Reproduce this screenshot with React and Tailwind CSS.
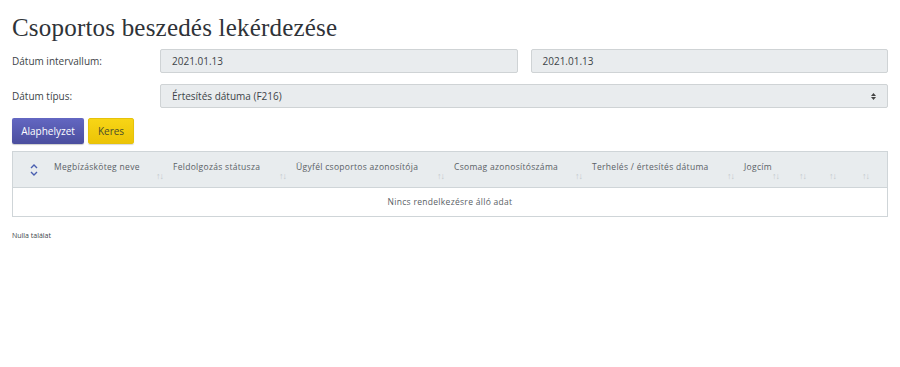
import React from "react";

function SortIcon() {
  return (
    <span className="text-[9px] leading-none text-[#c3c9cc] tracking-[-1px] self-end mb-[3px] shrink-0">↑↓</span>
  );
}

const cols = [
  { label: "Megbízásköteg neve", w: "w-[119px]" },
  { label: "Feldolgozás státusza", w: "w-[123px]" },
  { label: "Ügyfél csoportos azonosítója", w: "w-[158px]" },
  { label: "Csomag azonosítószáma", w: "w-[138px]" },
  { label: "Terhelés / értesítés dátuma", w: "w-[152px]" },
  { label: "Jogcím", w: "w-[42px]" },
];

export default function App() {
  return (
    <div className="w-[900px] h-[367px] bg-white px-[12px] pt-[12px] text-[#3d4448]" style={{ fontFamily: "'Open Sans', 'Noto Sans', sans-serif" }}>
      <h1 className="text-[25px] leading-[31px] text-[#2f3338] tracking-[0.2px]" style={{ fontFamily: "'Liberation Serif', 'DejaVu Serif', serif" }}>
        Csoportos beszedés lekérdezése
      </h1>
      <div className="mt-[6px] flex items-center h-[24px]">
        <div className="w-[148px] text-[10px]">Dátum intervallum:</div>
        <div className="flex-1 h-[24px] bg-[#e9ecee] border border-[#cfd3d5] rounded-[2px] flex items-center px-[11px] text-[10px]">2021.01.13</div>
        <div className="w-[13px]" />
        <div className="flex-1 h-[24px] bg-[#e9ecee] border border-[#cfd3d5] rounded-[2px] flex items-center px-[11px] text-[10px]">2021.01.13</div>
      </div>
      <div className="mt-[11px] flex items-center h-[24px]">
        <div className="w-[148px] text-[10px]">Dátum típus:</div>
        <div className="flex-1 h-[24px] bg-[#e9ecee] border border-[#cfd3d5] rounded-[2px] flex items-center justify-between pl-[11px] pr-[11px] text-[10px]">
          <span>Értesítés dátuma (F216)</span>
          <svg width="5" height="7" viewBox="0 0 5 7" fill="#444">
            <path d="M0 3 L2.5 0 L5 3 Z" />
            <path d="M0 4 L2.5 7 L5 4 Z" />
          </svg>
        </div>
      </div>
      <div className="mt-[10px] flex gap-[4px]">
        <button className="h-[26px] w-[72px] rounded-[2px] text-[10px] text-white bg-gradient-to-b from-[#6367c2] to-[#4b4e9e] shadow-[0_1px_1px_rgba(0,0,0,0.2)]">Alaphelyzet</button>
        <button className="h-[26px] w-[46px] rounded-[2px] text-[10px] text-[#4a4d2a] bg-gradient-to-b from-[#f7d515] to-[#ecc406] border border-[#e6c20a] shadow-[0_1px_1px_rgba(0,0,0,0.15)]">Keres</button>
      </div>
      <div className="mt-[7px] border border-[#cfd5d8]">
        <div className="h-[36px] bg-[#e8ecee] border-b border-[#cfd5d8] flex items-stretch text-[8.5px] tracking-[0.3px] text-[#5a6166]">
          <div className="w-[41px] flex items-center justify-center">
            <svg width="8" height="12" viewBox="0 0 8 12" fill="none" stroke="#4a5fb0" strokeWidth="1.4">
              <path d="M1 4 L4 1 L7 4" />
              <path d="M1 8 L4 11 L7 8" />
            </svg>
          </div>
          {cols.map((c) => (
            <div key={c.label} className={`${c.w} flex items-center justify-between pr-[10px] py-[4px]`}>
              <span className="self-center -mt-[4px]">{c.label}</span>
              <SortIcon />
            </div>
          ))}
          <div className="w-[30px] flex justify-end pr-[10px] py-[4px]"><SortIcon /></div>
          <div className="w-[30px] flex justify-end pr-[10px] py-[4px]"><SortIcon /></div>
          <div className="w-[30px] flex justify-end pr-[7px] py-[4px]"><SortIcon /></div>
        </div>
        <div className="h-[28px] flex items-center justify-center text-[8.5px] tracking-[0.3px] text-[#5a6166]">
          Nincs rendelkezésre álló adat
        </div>
      </div>
      <div className="mt-[14px] text-[7px] text-[#3d4448]">Nulla találat</div>
    </div>
  );
}
